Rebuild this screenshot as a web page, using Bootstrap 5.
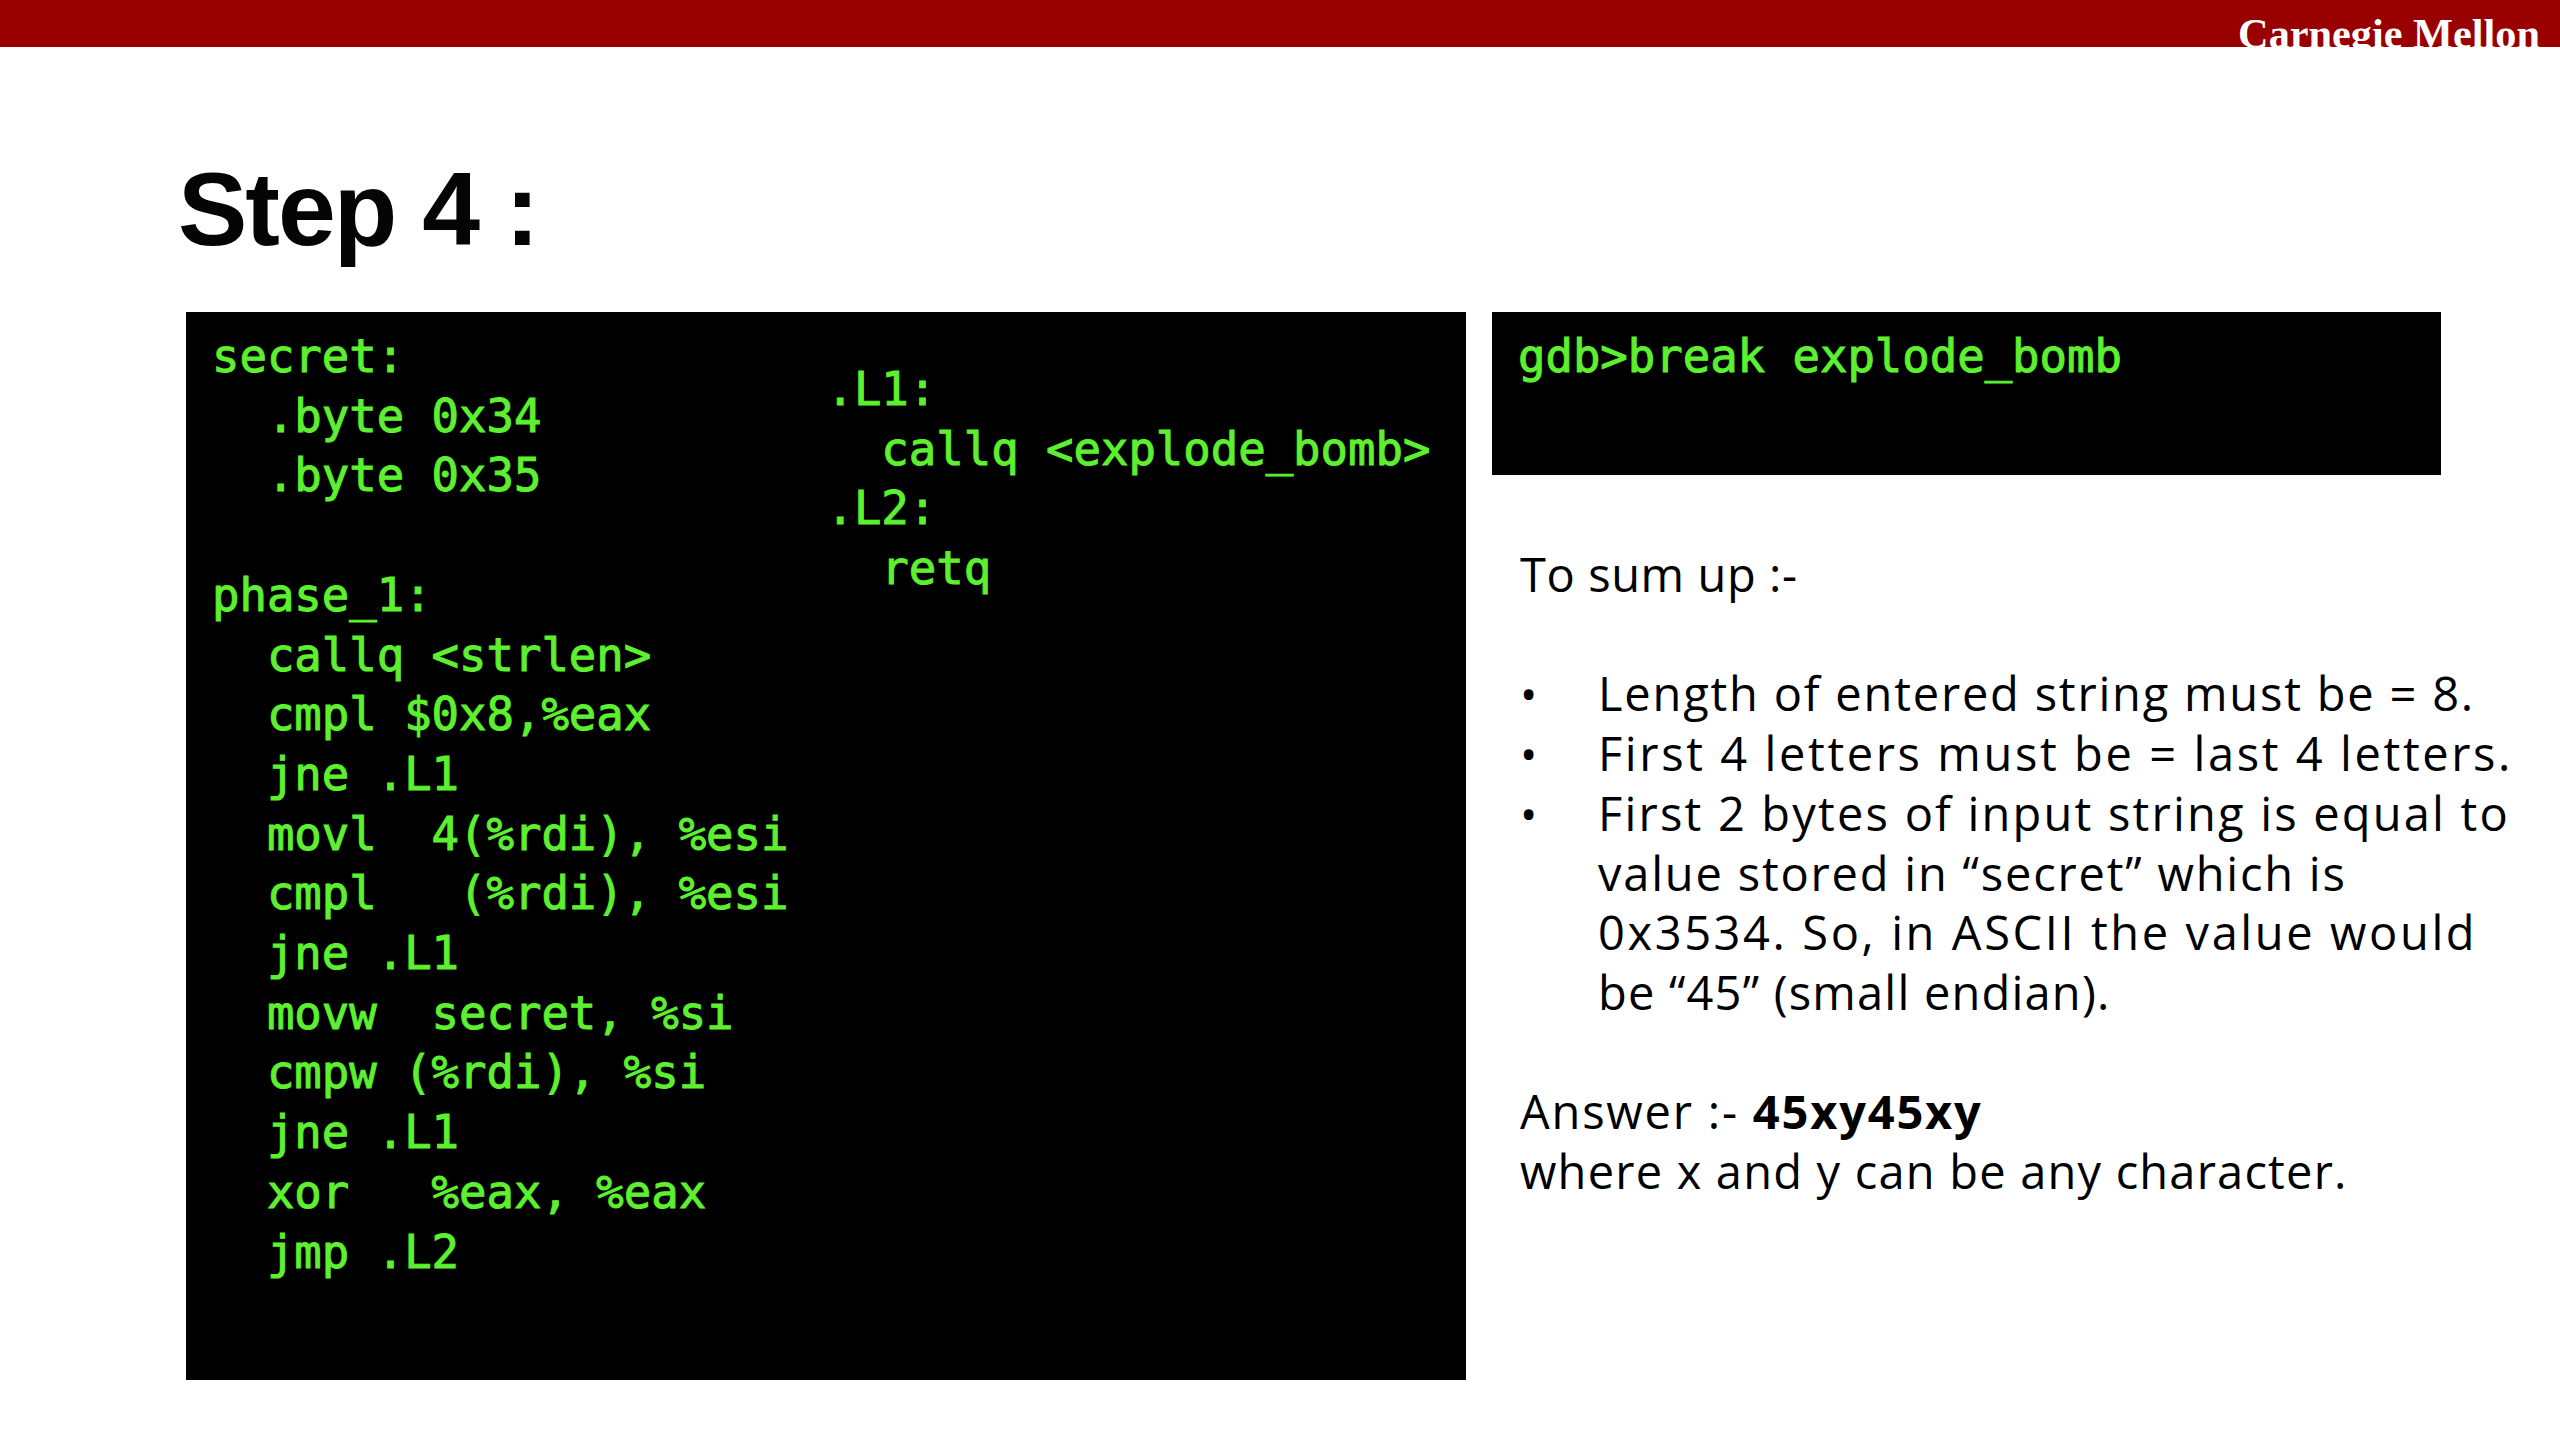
<!DOCTYPE html>
<html lang="en">
<head>
<meta charset="utf-8">
<title>Step 4</title>
<link href="https://cdn.jsdelivr.net/npm/bootstrap@5.3.0/dist/css/bootstrap.min.css" rel="stylesheet">
<style>
html,body{height:100%;background:#fff;}
.top-strip{height:47px;background:#990000;color:#fff;font:700 42.3px/1 "Liberation Serif",serif;padding:13px 20px 0 0;overflow:hidden;}
.slide-title{font:700 104px/1 "Liberation Sans",sans-serif;letter-spacing:-2px;color:#050505;margin:0;padding:110px 0 0 178px;height:265px;}
.slide-body{padding-left:186px;gap:26px;}
.term{background:#000;color:#5cf02f;font:400 45.6px/59.7px "DejaVu Sans Mono",monospace;-webkit-text-stroke:1px #5cf02f;white-space:pre;margin:0;}
.term-main{width:1280px;height:1068px;padding:15px 0 0 26px;}
.term-col2{padding:33px 0 0 0;margin-left:38px;}
.term-side{width:949px;height:163px;padding:15px 0 0 26px;}
.sum-text{font:400 47px/59.7px "Open Sans",sans-serif;color:#000;padding:70px 0 0 28px;white-space:nowrap;}
.sum-list{list-style:none;margin:0;padding:0;}
.sum-list li{padding-left:78px;position:relative;}
.sum-list li::before{content:"\2022";position:absolute;left:0;font-size:46px;}
.sum-text b{font-weight:700;}
.gap-line{height:59.7px;}
.fit-xs{letter-spacing:.6px;}
.fit-s{letter-spacing:1.2px;}
.fit-m{letter-spacing:1.8px;}
.fit-x{letter-spacing:2.2px;}
.fit-l{letter-spacing:2.6px;}
</style>
</head>
<body>
<div class="top-strip text-end">Carnegie Mellon</div>
<h1 class="slide-title">Step 4 :</h1>
<div class="slide-body d-flex align-items-start">
  <div class="term term-main d-flex">
<div>secret:
  .byte 0x34
  .byte 0x35

phase_1:
  callq &lt;strlen&gt;
  cmpl $0x8,%eax
  jne .L1
  movl  4(%rdi), %esi
  cmpl   (%rdi), %esi
  jne .L1
  movw  secret, %si
  cmpw (%rdi), %si
  jne .L1
  xor   %eax, %eax
  jmp .L2</div>
<div class="term-col2">.L1:
  callq &lt;explode_bomb&gt;
.L2:
  retq</div>
  </div>
  <div class="d-flex flex-column">
    <div class="term term-side">gdb&gt;break explode_bomb</div>
    <div class="sum-text">
      <div class="fit-xs">To sum up :-</div>
      <div class="gap-line"></div>
      <ul class="sum-list">
        <li class="fit-m">Length of entered string must be = 8.</li>
        <li class="fit-l">First 4 letters must be = last 4 letters.</li>
        <li class="fit-m"><span class="fit-x">First 2 bytes of input string is equal to</span><br>value stored in “secret” which is<br><span class="fit-l">0x3534. So, in ASCII the value would</span><br><span class="fit-s">be “45” (small endian).</span></li>
      </ul>
      <div class="gap-line"></div>
      <div class="fit-m">Answer :- <b>45xy45xy</b></div>
      <div class="fit-s">where x and y can be any character.</div>
    </div>
  </div>
</div>
<script src="https://cdn.jsdelivr.net/npm/bootstrap@5.3.0/dist/js/bootstrap.bundle.min.js"></script>
</body>
</html>
